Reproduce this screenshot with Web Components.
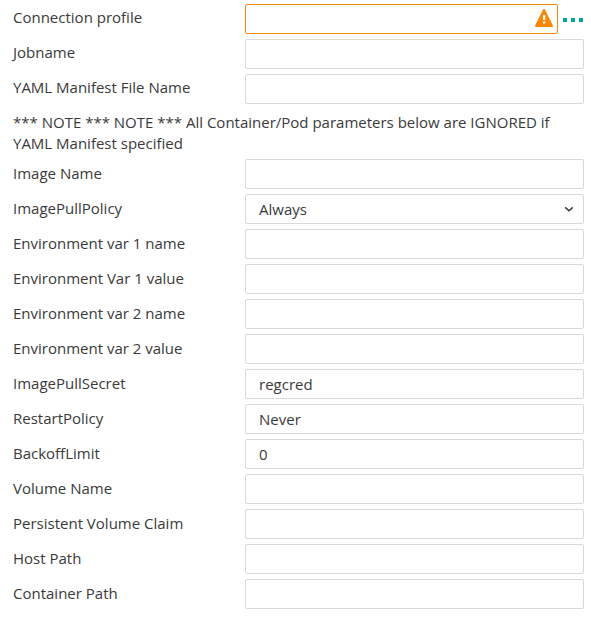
<!DOCTYPE html>
<html lang="en">
<head>
<meta charset="utf-8">
<title>Job parameters</title>
<style>
body { margin: 0; background: #fff; color: #3a3a3a; font: 15px/21px "Open Sans", sans-serif; }
</style>
</head>
<body>
<job-form>
  <form-row label="Connection profile"><text-field warning></text-field><more-button></more-button></form-row>
  <form-row label="Jobname"><text-field></text-field></form-row>
  <form-row label="YAML Manifest File Name"><text-field></text-field></form-row>
  <form-note>*** NOTE *** NOTE *** All Container/Pod parameters below are IGNORED if YAML Manifest specified</form-note>
  <form-row low label="Image Name"><text-field></text-field></form-row>
  <form-row low label="ImagePullPolicy"><text-field dropdown>Always</text-field></form-row>
  <form-row low label="Environment var 1 name"><text-field></text-field></form-row>
  <form-row low label="Environment Var 1 value"><text-field></text-field></form-row>
  <form-row low label="Environment var 2 name"><text-field></text-field></form-row>
  <form-row low label="Environment var 2 value"><text-field></text-field></form-row>
  <form-row low label="ImagePullSecret"><text-field>regcred</text-field></form-row>
  <form-row low label="RestartPolicy"><text-field>Never</text-field></form-row>
  <form-row low label="BackoffLimit"><text-field>0</text-field></form-row>
  <form-row low label="Volume Name"><text-field></text-field></form-row>
  <form-row low label="Persistent Volume Claim"><text-field></text-field></form-row>
  <form-row low label="Host Path"><text-field></text-field></form-row>
  <form-row low label="Container Path"><text-field></text-field></form-row>
</job-form>
<script>
function define(name, html, setup) {
  const template = document.createElement('template');
  template.innerHTML = html;
  customElements.define(name, class extends HTMLElement {
    constructor() {
      super();
      this.attachShadow({ mode: 'open' }).append(template.content.cloneNode(true));
    }
    connectedCallback() { if (setup) setup(this, this.shadowRoot); }
  });
}

define('job-form', `
  <style>
    :host { display: flex; flex-direction: column; gap: 5px; padding: 4px 7px 8px 13px; }
  </style><slot></slot>`);

define('form-row', `
  <style>
    :host { display: grid; grid-template-columns: 232px 1fr; height: 30px; }
    .label { padding-top: 3px; white-space: nowrap; }
    :host([low]) .label { padding-top: 4px; }
    .control { display: flex; min-width: 0; }
  </style>
  <span class="label"></span><div class="control"><slot></slot></div>`,
  (host, root) => { root.querySelector('.label').textContent = host.getAttribute('label'); });

define('form-note', `
  <style>:host { display: block; padding: 3px 20px 0 0; }</style><slot></slot>`);

define('text-field', `
  <style>
    :host { display: flex; flex: 1; align-items: center; box-sizing: border-box; height: 30px;
      padding-left: 13px; border: 1px solid #d9d9d9; border-radius: 2px; line-height: 28px; background: #fff; }
    :host([warning]) { border-color: #f68b0b; }
    .value { flex: 1; }
    svg { display: none; }
    :host([warning]) .warn { display: block; margin: 0 3px 2px 0; }
    :host([dropdown]) .arrow { display: block; margin-right: 9px; }
  </style>
  <span class="value"><slot></slot></span>
  <svg class="warn" width="20" height="20" viewBox="0 0 20 20">
    <path d="M10 2 18 18H2Z" fill="#f98706" stroke="#f98706" stroke-width="2" stroke-linejoin="round"/>
    <path d="M9 7h2.3v5H9zM9 13.6h2.3v2H9z" fill="#fff"/>
  </svg>
  <svg class="arrow" width="10" height="8" viewBox="0 0 10 8">
    <path d="M1.2 2.4 5 5.8 8.8 2.4" fill="none" stroke="#3a3a3a" stroke-width="1.5"/>
  </svg>`);

define('more-button', `
  <style>
    :host { display: flex; align-items: center; gap: 4px; width: 26px; height: 32px; box-sizing: border-box; padding-left: 5px; }
    i { width: 4px; height: 4px; background: #00a79d; }
  </style><i></i><i></i><i></i>`);
</script>
</body>
</html>
